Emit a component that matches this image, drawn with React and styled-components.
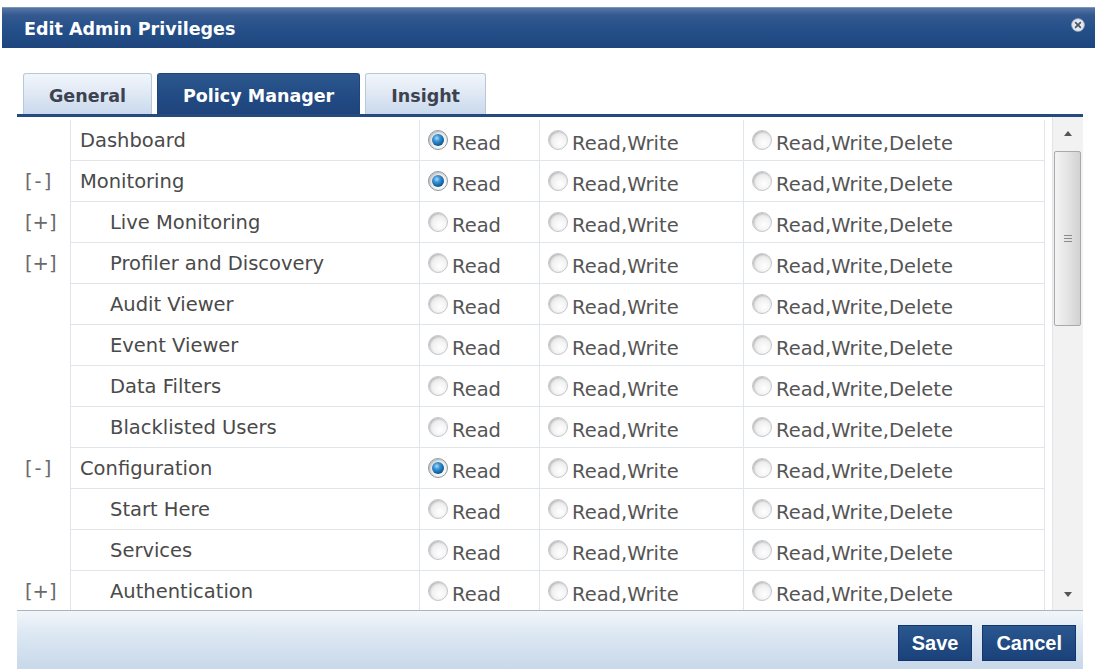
import React from "react";
import styled, { createGlobalStyle } from "styled-components";

const GlobalStyle = createGlobalStyle`
  html, body {
    margin: 0;
    padding: 0;
    background: #ffffff;
  }
  body {
    font-family: "DejaVu Sans", Verdana, sans-serif;
    overflow: hidden;
  }
`;

const rows = [
  { name: "Dashboard", level: 0, checked: true },
  { name: "Monitoring", level: 0, toggle: "-", checked: true },
  { name: "Live Monitoring", level: 1, toggle: "+" },
  { name: "Profiler and Discovery", level: 1, toggle: "+" },
  { name: "Audit Viewer", level: 1 },
  { name: "Event Viewer", level: 1 },
  { name: "Data Filters", level: 1 },
  { name: "Blacklisted Users", level: 1 },
  { name: "Configuration", level: 0, toggle: "-", checked: true },
  { name: "Start Here", level: 1 },
  { name: "Services", level: 1 },
  { name: "Authentication", level: 1, toggle: "+" },
];

const options = ["Read", "Read,Write", "Read,Write,Delete"];

function CloseIcon() {
  return (
    <svg width="14" height="14" viewBox="0 0 14 14">
      <circle cx="7" cy="7" r="6.3" fill="#e4e8ee" stroke="#b4bccb" strokeWidth="0.8" />
      <path d="M4.6 4.6 L9.4 9.4 M9.4 4.6 L4.6 9.4" stroke="#4b5668" strokeWidth="1.7" strokeLinecap="round" />
    </svg>
  );
}

function Grip() {
  return (
    <svg width="10" height="9" viewBox="0 0 10 9">
      <path d="M1 1.5 H9 M1 4.5 H9 M1 7.5 H9" stroke="#8a8a8a" strokeWidth="1" />
    </svg>
  );
}

function App() {
  return (
    <>
      <GlobalStyle />
      <Page>
        <Dialog>
          <TitleBar>
            <Title>Edit Admin Privileges</Title>
            <CloseButton>
              <CloseIcon />
            </CloseButton>
          </TitleBar>
          <DialogBody>
            <TabStrip>
              <Tab>General</Tab>
              <Tab $active>Policy Manager</Tab>
              <Tab>Insight</Tab>
            </TabStrip>
            <Content>
              <Table>
                {rows.map((row) => (
                  <Row key={row.name}>
                    <ToggleCell $minus={row.toggle === "-"}>
                      {row.toggle ? `[${row.toggle}]` : ""}
                    </ToggleCell>
                    <NameCell $level={row.level}>{row.name}</NameCell>
                    {options.map((opt, i) => (
                      <OptionCell key={opt}>
                        <Radio $checked={row.checked && i === 0} />
                        <OptionLabel>{opt}</OptionLabel>
                      </OptionCell>
                    ))}
                  </Row>
                ))}
              </Table>
              <Scrollbar>
                <ScrollButton>
                  <ArrowUp />
                </ScrollButton>
                <Thumb>
                  <Grip />
                </Thumb>
                <ScrollButton $bottom>
                  <ArrowDown />
                </ScrollButton>
              </Scrollbar>
            </Content>
            <Footer>
              <Button>Save</Button>
              <Button>Cancel</Button>
            </Footer>
          </DialogBody>
        </Dialog>
      </Page>
    </>
  );
}

const Page = styled.div`
  padding: 7px 3px 0 2px;
`;

const Dialog = styled.div`
  width: 1093px;
  background: #ffffff;
`;

const TitleBar = styled.div`
  height: 41px;
  box-sizing: border-box;
  display: flex;
  align-items: center;
  justify-content: space-between;
  padding: 0 10px 0 22px;
  background: linear-gradient(to bottom, #5575a6 0%, #34598f 18%, #25508a 50%, #1e457d 100%);
  border-top: 1px solid #8093b8;
`;

const Title = styled.div`
  color: #ffffff;
  font-weight: bold;
  font-size: 17.5px;
  padding-top: 2px;
`;

const CloseButton = styled.div`
  display: flex;
  align-items: center;
  margin-top: -6px;
`;

const DialogBody = styled.div`
  padding: 24px 12px 0 15px;
`;

const TabStrip = styled.div`
  display: flex;
  align-items: flex-end;
  gap: 5px;
  padding-left: 6px;
  height: 42px;
  border-bottom: 3px solid #244a7f;
`;

const Tab = styled.div`
  height: 41px;
  box-sizing: border-box;
  display: flex;
  align-items: center;
  padding: 4px 25px 0;
  border: 1px solid ${(p) => (p.$active ? "#1f457c" : "#b8c8dc")};
  border-bottom: none;
  border-radius: 3px 3px 0 0;
  font-weight: bold;
  font-size: 17.5px;
  color: ${(p) => (p.$active ? "#ffffff" : "#3c4250")};
  background: ${(p) =>
    p.$active
      ? "linear-gradient(to bottom, #2c578f 0%, #234c85 50%, #1e447b 100%)"
      : "linear-gradient(to bottom, #f2f6fb 0%, #dfe8f4 50%, #c9d9ed 100%)"};
`;

const Content = styled.div`
  display: flex;
  height: 493px;
`;

const Table = styled.div`
  width: 1028px;
  overflow: hidden;
  padding-top: 3px;
  box-sizing: border-box;
`;

const Row = styled.div`
  display: grid;
  grid-template-columns: 53px 350px 120px 204px 301px;
  height: 41px;
`;

const ToggleCell = styled.div`
  display: flex;
  align-items: center;
  padding-left: 8px;
  font-size: 19.5px;
  color: #6a6a6a;
  letter-spacing: ${(p) => (p.$minus ? "2px" : "0")};
`;

const NameCell = styled.div`
  display: flex;
  align-items: center;
  padding-left: ${(p) => (p.$level ? "39px" : "9px")};
  border-left: 1px solid #e0e5eb;
  border-right: 1px solid #e0e5eb;
  border-bottom: 1px solid #e0e5eb;
  font-size: 19.5px;
  color: #4a4a4a;
  white-space: nowrap;
`;

const OptionCell = styled.div`
  display: flex;
  align-items: center;
  padding-left: 8px;
  border-right: 1px solid #e0e5eb;
  border-bottom: 1px solid #e0e5eb;
  white-space: nowrap;
`;

const Radio = styled.span`
  flex: none;
  box-sizing: border-box;
  width: 20px;
  height: 20px;
  margin-right: 4px;
  border-radius: 50%;
  display: flex;
  align-items: center;
  justify-content: center;
  border: 1px solid ${(p) => (p.$checked ? "#8d98a4" : "#c3c7cc")};
  background: radial-gradient(circle at 62% 66%, #ffffff 0%, #f3f3f3 40%, #d9d9d9 100%);
  box-shadow: inset 1px 1px 2px rgba(0, 0, 0, 0.2);
  &::after {
    content: "";
    display: ${(p) => (p.$checked ? "block" : "none")};
    width: 12px;
    height: 12px;
    border-radius: 50%;
    background: radial-gradient(circle at 40% 35%, #a6dcff 0%, #3a93d4 30%, #0f5c99 68%, #06345c 100%);
  }
`;

const OptionLabel = styled.span`
  font-size: 19.5px;
  color: #555555;
  padding-top: 6px;
`;

const Scrollbar = styled.div`
  width: 31px;
  margin-left: 7px;
  display: flex;
  flex-direction: column;
  background: #f2f2f2;
  border-left: 1px solid #e4e4e4;
  box-sizing: border-box;
`;

const ScrollButton = styled.div`
  height: 32px;
  display: flex;
  align-items: center;
  justify-content: center;
  margin-top: ${(p) => (p.$bottom ? "auto" : "0")};
`;

const ArrowUp = styled.span`
  width: 0;
  height: 0;
  border-left: 4px solid transparent;
  border-right: 4px solid transparent;
  border-bottom: 5px solid #555555;
`;

const ArrowDown = styled.span`
  width: 0;
  height: 0;
  border-left: 4px solid transparent;
  border-right: 4px solid transparent;
  border-top: 5px solid #555555;
`;

const Thumb = styled.div`
  margin: 2px 2px 0 1px;
  height: 175px;
  box-sizing: border-box;
  border: 1px solid #a9a9a9;
  border-radius: 2px;
  background: linear-gradient(to right, #f4f4f4 0%, #e4e4e4 50%, #d2d2d2 100%);
  display: flex;
  align-items: center;
  justify-content: center;
`;

const Footer = styled.div`
  height: 59px;
  box-sizing: border-box;
  border-top: 1px solid #a9b5c2;
  background: linear-gradient(to bottom, #f2f6fa 0%, #dce7f2 40%, #c8d8ea 100%);
  display: flex;
  justify-content: flex-end;
  align-items: flex-start;
  gap: 10px;
  padding: 14px 7px 0 0;
`;

const Button = styled.button`
  height: 36px;
  padding: 0 13px;
  border: 1px solid #15366a;
  background: linear-gradient(to bottom, #2b5890 0%, #214b84 50%, #1b417a 100%);
  color: #ffffff;
  font-family: "Liberation Sans", Arial, sans-serif;
  font-weight: bold;
  font-size: 20px;
  cursor: pointer;
`;

export default App;
